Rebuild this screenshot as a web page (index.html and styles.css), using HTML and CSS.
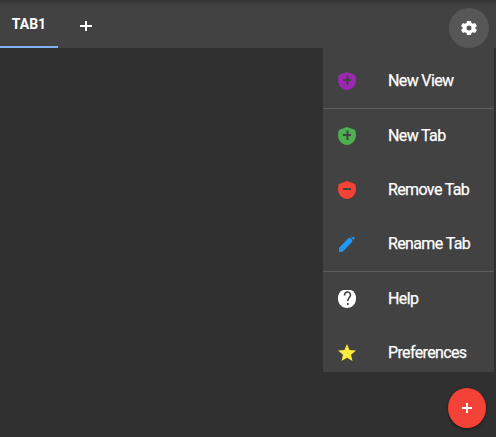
FILE: index.html
```
<!DOCTYPE html>
<html lang="en">
<head>
<meta charset="utf-8">
<title>Tabs</title>
<link rel="stylesheet" href="styles.css">
</head>
<body>
<header class="bar">
  <div class="tab">TAB1</div>
  <button class="add" aria-label="Add tab"><svg viewBox="0 0 12 12"><path d="M0 6H12M6 1V11"/></svg></button>
  <button class="gear" aria-label="Settings"><svg viewBox="0 0 16 14"><path fill-rule="evenodd" d="M6 0H10L10.500 2L12 2.800L14 2L16 5L14.400 6.300V7.700L16 9L14 12L12 11.200L10.500 12L10 14H6L5.500 12L4 11.200L2 12L0 9L1.600 7.700V6.300L0 5L2 2L4 2.800L5.500 2ZM8 4.500A2.500 2.500 0 1 0 8 9.500A2.500 2.500 0 1 0 8 4.500Z"/></svg></button>
</header>
<nav class="menu">
  <div class="item"><svg class="purple" viewBox="0 0 18 18"><path d="M9 0Q12 .8 17 3Q18 4.500 18 8.500C18 13.500 13.500 18 9 18S0 13.500 0 8.500Q0 4.500 1 3Q6 .8 9 0Z"/><path class="cut" d="M5 8H13M9.500 3.500V13"/></svg><span>New View</span></div>
  <div class="item ruled"><svg class="green" viewBox="0 0 18 18"><path d="M9 0Q12 .8 17 3Q18 4.500 18 8.500C18 13.500 13.500 18 9 18S0 13.500 0 8.500Q0 4.500 1 3Q6 .8 9 0Z"/><path class="cut" d="M5 8H13M9.500 3.500V13"/></svg><span>New Tab</span></div>
  <div class="item"><svg class="red" viewBox="0 0 18 18"><path d="M9 0Q12 .8 17 3Q18 4.500 18 8.500C18 13.500 13.500 18 9 18S0 13.500 0 8.500Q0 4.500 1 3Q6 .8 9 0Z"/><path class="cut" d="M5 8H13"/></svg><span>Remove Tab</span></div>
  <div class="item"><svg class="blue" viewBox="0 0 18 18"><path d="M1 13L10 3.500Q11.500 2 13 3.500L14 4.500Q14.800 5.800 14 7L5.500 16Q4.500 17 3 17H1ZM12.500 1L14.500 2.300L17 2L15.500 5.300Z"/></svg><span>Rename Tab</span></div>
  <div class="item ruled"><svg class="white" viewBox="0 0 18 18"><path d="M5 0H13Q18 2 18 8.500C18 14 14 18 9 18S0 14 0 8.500Q0 2 5 0Z"/><path class="question" d="M6.500 5.500C6.500 1 12.500 1 12.500 5C12.500 7.700 9.800 7.500 9.800 11M9.800 13V15"/></svg><span>Help</span></div>
  <div class="item"><svg class="yellow" viewBox="0 0 18 18"><path d="M9 0L11.500 6L18 6.600L13 10.800L14.500 17L9 13.800L3.500 17L5 10.800L0 6.600L6.500 6Z"/></svg><span>Preferences</span></div>
</nav>
<button class="fab" aria-label="Add"><svg viewBox="0 0 12 12"><path d="M1 6H11M6 1V11"/></svg></button>
</body>
</html>
```
FILE: styles.css
```
* { box-sizing: border-box; }
body {
  margin: 0;
  height: 437px;
  overflow: hidden;
  background: #303030;
  color: #fff;
  font-family: Roboto, sans-serif;
}
button { border: 0; padding: 0; color: inherit; }
svg { display: block; flex: none; overflow: visible; }
.bar {
  display: flex;
  height: 48px;
  padding-right: 7px;
  background: linear-gradient(#353535, #3e3e3e 4px, #424242 9px);
}
.tab {
  width: 58px;
  border-bottom: 2px solid #82b1ff;
  font-size: 14px;
  font-weight: 700;
  line-height: 48px;
  text-align: center;
}
.add {
  display: grid;
  place-items: center;
  width: 56px;
  height: 52px;
  background: none;
}
.add svg { width: 12px; height: 12px; }
.add path, .fab path { stroke: #fff; stroke-width: 2; }
.gear {
  display: grid;
  place-items: center;
  width: 40px;
  height: 40px;
  margin: 8px 0 0 auto;
  border-radius: 50%;
  background: #575757;
}
.gear svg { width: 16px; height: 14px; fill: #fff; }
.menu {
  width: 171px;
  height: 324px;
  margin-left: 323px;
  padding-top: 6px;
  overflow: hidden;
  background: #424242;
}
.item {
  display: flex;
  align-items: center;
  gap: 32px;
  height: 54px;
  padding: 0 0 1px 15px;
  font-size: 16px;
  letter-spacing: -0.63px;
  -webkit-text-stroke: 0.25px #fff;
}
.item span { padding-bottom: 1px; white-space: nowrap; }
.item svg { width: 18px; height: 18px; }
.ruled { height: 55px; border-top: 1px solid #5c5c5c; }
.cut { fill: none; stroke: #424242; stroke-width: 2; }
.question { fill: none; stroke: #424242; stroke-width: 1.6; }
.purple { fill: #9c27b0; }
.green { fill: #4caf50; }
.red { fill: #f44336; }
.blue { fill: #2196f3; }
.white { fill: #fff; }
.yellow { fill: #ffeb3b; }
.fab {
  display: grid;
  place-items: center;
  width: 38px;
  height: 40px;
  margin: 16px 0 0 448px;
  border-radius: 50%;
  background: #f44336;
  box-shadow: 0 1px 3px #0008;
}
.fab svg { width: 12px; height: 12px; }
```
